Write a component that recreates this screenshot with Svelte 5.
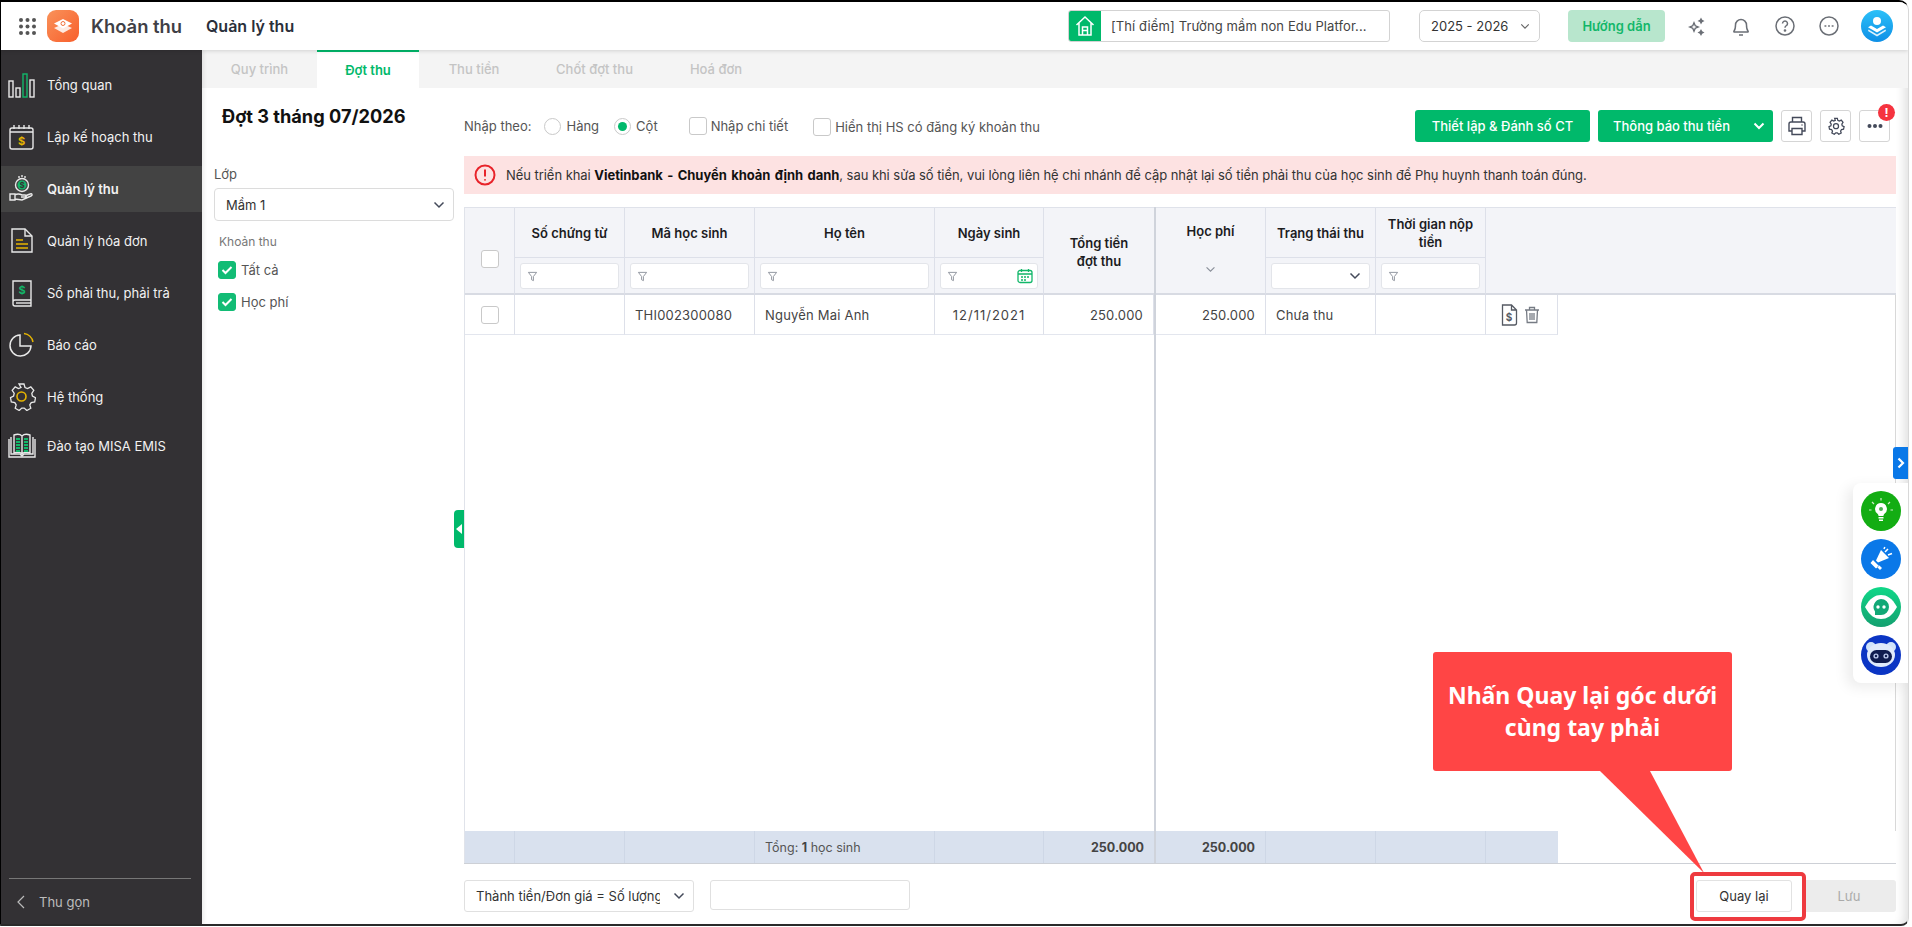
<script>
  const W = '#e8e8e8';
  const nav = [
    { label: 'Tổng quan', icon: `<g fill="none" stroke="${W}" stroke-width="1.4"><rect x="1" y="10" width="4" height="16"/><rect x="8" y="17" width="4" height="9"/><rect x="15" y="3" width="4" height="23" stroke="#12b76a"/><rect x="22" y="9" width="4" height="17"/></g>` },
    { label: 'Lập kế hoạch thu', icon: `<g fill="none" stroke="${W}" stroke-width="1.4"><rect x="2" y="5" width="23" height="21" rx="2"/><path d="M2 9h23"/><path d="M6 2v4M11 2v4M16 2v4M21 2v4"/></g><text x="13.5" y="22" font-size="11" font-weight="700" text-anchor="middle" fill="#e6b400" font-family="Inter">$</text>` },
    { label: 'Quản lý thu', active: true, icon: `<g fill="none" stroke="${W}" stroke-width="1.4"><circle cx="14" cy="10" r="6.5"/><path d="M11 1v2M14 0v2M17 1v2"/><path d="M2 19h5v6H2zM7 20c3-2 5-1 7 0h3c2 0 2 2 0 2h-4M7 24l7 1 9-4c2-1 1-3-1-2l-5 2"/></g><circle cx="14" cy="10" r="4.5" fill="#12b76a"/><text x="14" y="13" font-size="8" font-weight="700" text-anchor="middle" fill="#333" font-family="Inter">$</text>` },
    { label: 'Quản lý hóa đơn', icon: `<g fill="none" stroke="${W}" stroke-width="1.4"><path d="M4 2h13l7 7v16H4z"/><path d="M17 2v7h7"/></g><path d="M8 13h7M8 17h12M8 21h12" stroke="#e6b400" stroke-width="1.6"/>` },
    { label: 'Sổ phải thu, phải trả', icon: `<g fill="none" stroke="${W}" stroke-width="1.4"><path d="M5 23V2h18v25H7a2 2 0 0 1-2-2v-2a2 2 0 0 1 2-2h16"/><path d="M8 24h15"/></g><text x="14" y="15" font-size="11" font-weight="700" text-anchor="middle" fill="#12b76a" font-family="Inter">$</text>` },
    { label: 'Báo cáo', icon: `<g fill="none" stroke-width="1.5"><path d="M12 4a10.5 10.5 0 1 0 11 11H12z" stroke="${W}"/><path d="M16 2.5A10.5 10.5 0 0 1 25 11" stroke="#e6b400"/></g>` },
    { label: 'Hệ thống', icon: `<path d="M11.5 2h5l1 3.5 2.5 1 3.3-1.7 3 3.6-2 3 .6 2.6 3.1 1.6-.8 4.4-3.5.6-1.4 2.3 1 3.4-4 2.2-2.6-2.4h-2.4l-2.6 2.4-4-2.2 1-3.4-1.4-2.3-3.5-.6-.8-4.4 3.1-1.6.6-2.6-2-3 3-3.6 3.3 1.7 2.5-1z" fill="none" stroke="${W}" stroke-width="1.3" transform="translate(-.5 -1)"/><circle cx="13.5" cy="13.5" r="4.5" fill="none" stroke="#e6b400" stroke-width="1.6"/>` },
    { label: 'Đào tạo MISA EMIS', short: true, icon: `<g fill="none" stroke="${W}" stroke-width="1.4"><path d="M3 5v17h9l2 2 2-2h9V5"/><path d="M1 7v18h26V7M14 4v20M14 4c-2-2-5-2-8-1v18c3-1 6-1 8 1 2-2 5-2 8-1V3c-3-1-6-1-8 1z"/></g><path d="M8 7h4M8 10h4M8 13h4M8 16h4M8 19h4M16 7h4M16 10h4M16 13h4M16 16h4M16 19h4" stroke="#12b76a" stroke-width="2"/>` }
  ];
  const filter = `<svg width="11" height="11" viewBox="0 0 12 12" fill="none" stroke="#8a8f99"><path d="M1.5 1.5h9L7 6v4.5L5 9.5V6z"/></svg>`;
  const chev = `<svg width="12" height="8" viewBox="0 0 12 8" fill="none" stroke="#444a5a" stroke-width="1.5"><path d="M1.5 1.5 6 6l4.5-4.5"/></svg>`;
  const chevThin = `<svg width="10" height="7" viewBox="0 0 12 8" fill="none" stroke="#666" stroke-width="1.4"><path d="M1.5 1.5 6 6l4.5-4.5"/></svg>`;
</script>

<div class="frame">
  <div class="window">
    <header class="topbar">
      <svg class="apps" width="17" height="17" viewBox="0 0 17 17" fill="#555">
        {#each [2, 8.5, 15] as y}
          {#each [2, 8.5, 15] as x}
            <circle cx={x} cy={y} r="2" />
          {/each}
        {/each}
      </svg>
      <div class="logo">
        <svg width="20" height="16" viewBox="0 0 20 16">
          <path d="M10 6 19 10 10 15 1 10z" fill="#fff" opacity=".85" />
          <path d="M10 1 19 5.5 10 10.5 1 5.5z" fill="#fff" />
          <circle cx="10" cy="5.5" r="2" fill="none" stroke="#f2703a" />
        </svg>
      </div>
      <div class="app-name">Khoản thu</div>
      <div class="page-name">Quản lý thu</div>

      <div class="school">
        <span class="house">
          <svg width="20" height="22" viewBox="0 0 20 22" fill="none" stroke="#fff" stroke-width="1.5">
            <path d="M1.5 10 10 2l8.5 8M4 8v12h12V8M7.5 20v-8h5v8M7.5 15.5h5" />
          </svg>
        </span>
        <span class="school-name">[Thí điểm] Trường mầm non Edu Platfor...</span>
      </div>
      <div class="year">2025 - 2026 {@html chevThin}</div>
      <button class="guide">Hướng dẫn</button>

      <svg class="ico" style="margin-left:22px" width="20" height="20" viewBox="0 0 20 20" fill="#6b6f76">
        <path d="M7 5l1.8 4.2L13 11l-4.2 1.8L7 17l-1.8-4.2L1 11l4.2-1.8zM7 8.5 6.3 10.3 4.5 11l1.8.7L7 13.500l.7-1.8 1.8-.7-1.8-.7z" fill-rule="evenodd" />
        <path d="M14 1.5l1.2 2.3 2.3 1.2-2.3 1.2L14 8.500l-1.2-2.5L10.500 5l2.3-1.2zM14 13l1.2 2.3 2.3 1.2-2.3 1.2L14 20l-1.2-2.3-2.3-1.2 2.3-1.2z" />
      </svg>
      <svg class="ico" style="margin-left:24px" width="20" height="22" viewBox="0 0 20 22" fill="none" stroke="#6b6f76" stroke-width="1.5">
        <path d="M3 16c1.5-1.5 1.5-3 1.5-6a5.5 5.5 0 0 1 11 0c0 3 0 4.5 1.5 6 .5.7 0 1-.5 1h-13c-.5 0-1-.3-.5-1zM8 20h4" />
      </svg>
      <svg class="ico" style="margin-left:24px" width="20" height="20" viewBox="0 0 20 20" fill="none" stroke="#6b6f76" stroke-width="1.5">
        <circle cx="10" cy="10" r="9" />
        <path d="M7.5 7.5a2.5 2.5 0 1 1 3.8 2.2c-.9.5-1.3 1-1.3 2" />
        <circle cx="10" cy="14.5" r=".6" fill="#6b6f76" />
      </svg>
      <svg class="ico" style="margin-left:24px" width="20" height="20" viewBox="0 0 20 20" fill="none" stroke="#6b6f76" stroke-width="1.5">
        <circle cx="10" cy="10" r="9" />
        <path d="M6 10h.8M9.6 10h.8M13.2 10h.8" stroke-linecap="round" />
      </svg>
      <div class="avatar">
        <svg width="22" height="22" viewBox="0 0 22 22" fill="#fff">
          <circle cx="11" cy="6" r="4" />
          <path d="M5 10.5 11 14l6-3.500 3 1.800L11 17.500 2 12.300z" />
          <path d="M2.5 14.5 11 19.5l8.5-5 .5 1.5L11 21.5 2 16z" opacity=".85" />
        </svg>
      </div>
    </header>

    <div class="body">
      <nav class="sidebar">
        <div class="nav-list">
          {#each nav as item}
            <div class="nav-item" class:active={item.active} class:short={item.short}>
              <svg width="28" height="28" viewBox="0 0 28 28">{@html item.icon}</svg>
              <span>{item.label}</span>
            </div>
          {/each}
        </div>
        <div class="collapse">
          <svg width="10" height="14" viewBox="0 0 10 14" fill="none" stroke="#bbb" stroke-width="1.2"><path d="M8 1 2 7l6 6" /></svg>
          Thu gọn
        </div>
      </nav>

      <div class="content">
        <div class="tabs">
          <div class="tab t1">Quy trình</div>
          <div class="tab t2 active">Đợt thu</div>
          <div class="tab t3">Thu tiền</div>
          <div class="tab t4">Chốt đợt thu</div>
          <div class="tab t5">Hoá đơn</div>
        </div>

        <div class="work">
          <aside class="left">
            <h2>Đợt 3 tháng 07/2026</h2>
            <label class="lbl" for="lop">Lớp</label>
            <div class="select" id="lop">Mầm 1 {@html chev}</div>
            <div class="group">Khoản thu</div>
            <div class="check-row"><span class="check on"><svg width="12" height="10" viewBox="0 0 12 10" fill="none" stroke="#fff" stroke-width="2"><path d="M1.5 5 4.5 8l6-6" /></svg></span>Tất cả</div>
            <div class="check-row"><span class="check on"><svg width="12" height="10" viewBox="0 0 12 10" fill="none" stroke="#fff" stroke-width="2"><path d="M1.5 5 4.5 8l6-6" /></svg></span>Học phí</div>
            <div class="toggle"><i></i></div>
          </aside>

          <main class="main">
            <div class="toolbar">
              <span class="opt">Nhập theo:</span>
              <span class="radio r1"></span><span class="opt">Hàng</span>
              <span class="radio r2 on"></span><span class="opt">Cột</span>
              <span class="check c1"></span><span class="opt">Nhập chi tiết</span>
              <span class="check c2"></span><span class="opt low">Hiển thị HS có đăng ký khoản thu</span>

              <button class="green b1">Thiết lập &amp; Đánh số CT</button>
              <button class="green b2">Thông báo thu tiền
                <svg width="12" height="8" viewBox="0 0 12 8" fill="none" stroke="#fff" stroke-width="2"><path d="M1.5 1.5 6 6l4.5-4.5" /></svg>
              </button>
              <button class="sq" aria-label="In">
                <svg width="20" height="20" viewBox="0 0 20 20" fill="none" stroke="#444a5a" stroke-width="1.4"><path d="M5.5 6V1.5h9V6M5 15H2V8a2 2 0 0 1 2-2h12a2 2 0 0 1 2 2v7h-3M5 12.5h10v6H5zM14.5 9h1" /></svg>
              </button>
              <button class="sq" aria-label="Cài đặt">
                <svg width="18" height="18" viewBox="0 0 20 20" fill="none" stroke="#444a5a" stroke-width="1.4"><path d="M8.5 1.5h3l.5 2.3 1.7.8 2.1-1.100 2 2.400-1.300 2 .4 1.800 2.100 1-.6 2.900-2.300.4-1 1.600.7 2.200-2.700 1.400-1.700-1.600h-1.600l-1.700 1.600-2.700-1.400.7-2.200-1-1.600-2.300-.4-.6-2.900 2.100-1 .4-1.800-1.300-2 2-2.400 2.100 1.100 1.700-.8z" /><circle cx="10" cy="10.2" r="2.8" /></svg>
              </button>
              <button class="sq more">
                <svg width="16" height="6" viewBox="0 0 16 6" fill="#444a5a"><circle cx="2.5" cy="3" r="2" /><circle cx="8" cy="3" r="2" /><circle cx="13.5" cy="3" r="2" /></svg>
                <span class="badge">!</span>
              </button>
            </div>

            <div class="alert">
              <svg width="22" height="22" viewBox="0 0 22 22" fill="none" stroke="#e8232a" stroke-width="2"><circle cx="11" cy="11" r="9.5" /><path d="M11 5.5v7M11 15.2v1.300" /></svg>
              <span>Nếu triển khai <b>Vietinbank - Chuyển khoản định danh</b>, sau khi sửa số tiền, vui lòng liên hệ chi nhánh để cập nhật lại số tiền phải thu của học sinh để Phụ huynh thanh toán đúng.</span>
            </div>

            <div class="table">
              <div class="pane pane-l">
                <div class="thead cols-l">
                  <div class="th span chk"><span class="check"></span></div>
                  <div class="th top">Số chứng từ</div>
                  <div class="th top">Mã học sinh</div>
                  <div class="th top">Họ tên</div>
                  <div class="th top">Ngày sinh</div>
                  <div class="th span mid last">Tổng tiền<br />đợt thu</div>
                  <div class="th flt"><div class="finput">{@html filter}</div></div>
                  <div class="th flt"><div class="finput">{@html filter}</div></div>
                  <div class="th flt"><div class="finput">{@html filter}</div></div>
                  <div class="th flt"><div class="finput">{@html filter}
                    <svg class="cal" width="16" height="16" viewBox="0 0 16 16" fill="none" stroke="#12b76a" stroke-width="1.3"><rect x="1" y="2.5" width="14" height="12" rx="2" /><path d="M1 6h14M4.5 1v3M11.5 1v3M4 9h2M7 9h2M10 9h2M4 12h2M7 12h2" /></svg>
                  </div></div>
                </div>
                <div class="trow cols-l">
                  <div class="td chk"><span class="check"></span></div>
                  <div class="td"></div>
                  <div class="td pad">THI002300080</div>
                  <div class="td pad">Nguyễn Mai Anh</div>
                  <div class="td center">12/11/2021</div>
                  <div class="td right last">250.000</div>
                </div>
                <div class="fill"></div>
                <div class="tfoot cols-l">
                  <div class="tf"></div>
                  <div class="tf"></div>
                  <div class="tf"></div>
                  <div class="tf sum">Tổng: <b>1</b> học sinh</div>
                  <div class="tf"></div>
                  <div class="tf right"><b>250.000</b></div>
                </div>
              </div>

              <div class="pane pane-r">
                <div class="thead cols-r">
                  <div class="th span fee"><span>Học phí</span>
                    <svg width="11" height="7" viewBox="0 0 12 8" fill="none" stroke="#8a8f99" stroke-width="1.3"><path d="M1.5 1.5 6 6l4.5-4.5" /></svg>
                  </div>
                  <div class="th top">Trạng thái thu</div>
                  <div class="th top">Thời gian nộp<br />tiền</div>
                  <div class="th span wide"></div>
                  <div class="th flt"><div class="finput sel">{@html chev}</div></div>
                  <div class="th flt"><div class="finput">{@html filter}</div></div>
                </div>
                <div class="trow cols-r edge">
                  <div class="td right">250.000</div>
                  <div class="td pad">Chưa thu</div>
                  <div class="td"></div>
                  <div class="td acts">
                    <svg width="17" height="22" viewBox="0 0 17 22" fill="none" stroke="#555a63" stroke-width="1.3"><path d="M1.5 1h9l5 5v13a2 2 0 0 1-2 2h-12zM10.5 1v5h5" /><text x="8" y="17" font-size="10" font-weight="700" fill="#555a63" stroke="none" text-anchor="middle" font-family="Inter">$</text></svg>
                    <svg width="16" height="18" viewBox="0 0 16 18" fill="none" stroke="#767b84" stroke-width="1.3"><path d="M1 4h14M5.5 4V1.5h5V4M2.5 4l.7 12.5h9.6L13.5 4M6 7v7M8 7v7M10 7v7" /></svg>
                  </div>
                </div>
                <div class="fill edge"></div>
                <div class="tfoot cols-r">
                  <div class="tf right"><b>250.000</b></div>
                  <div class="tf"></div>
                  <div class="tf"></div>
                  <div class="tf"></div>
                </div>
              </div>
            </div>

            <div class="bottom">
              <div class="formula"><span>Thành tiền/Đơn giá = Số lượng</span>{@html chev}</div>
              <div class="blank"></div>
              <button class="back">Quay lại</button>
              <button class="save">Lưu</button>
            </div>
          </main>
        </div>
      </div>
    </div>

    <div class="side-tab">
      <svg width="8" height="12" viewBox="0 0 8 12" fill="none" stroke="#fff" stroke-width="2.2"><path d="M1.5 1.5 6 6l-4.5 4.5" /></svg>
    </div>
    <div class="dock">
      <span class="dot bulb">
        <svg width="26" height="28" viewBox="0 0 26 28" fill="#fff">
          <path d="M13 6a6 6 0 0 0-3.5 10.8c.7.6 1 1.2 1 2.200h5c0-1 .3-1.600 1-2.200A6 6 0 0 0 13 6z" />
          <circle cx="13" cy="12" r="2" fill="#4caf50" />
          <rect x="10.5" y="20" width="5" height="1.5" /><rect x="11" y="22.5" width="4" height="1.5" />
          <path d="M13 1v2.5M4 5l2 2M22 5l-2 2M1 13h2.5M22.5 13H25" stroke="#cfe9c9" stroke-width="1.2" />
        </svg>
      </span>
      <span class="dot horn">
        <svg width="26" height="26" viewBox="0 0 26 26" fill="#fff">
          <path d="M13 4l8 8-11 4.5-2-2z" />
          <path d="M5 14l6 6-3 2.5-5.5-5.5zM9 21l3 3 2-2-2.5-2.5z" />
          <path d="M17 6l3-3M20 9l4-1.5M16 3l.8-2" stroke="#fff" stroke-width="1.5" />
        </svg>
      </span>
      <span class="dot chat">
        <svg width="34" height="26" viewBox="0 0 34 26">
          <path d="M1 13C6 4 11 1 17 1s11 3 16 12c-5 9-10 12-16 12S6 22 1 13z" fill="#fff" />
          <path d="M17 5a8 8 0 0 1 0 16h-6v-3.5A8 8 0 0 1 17 5z" fill="#12a876" />
          <circle cx="14" cy="13" r="1.7" fill="#fff" /><circle cx="20" cy="13" r="1.7" fill="#fff" />
        </svg>
      </span>
      <span class="dot bot">
        <svg width="32" height="28" viewBox="0 0 32 28">
          <circle cx="6" cy="6" r="5" fill="#cfe3fb" /><circle cx="26" cy="6" r="5" fill="#cfe3fb" />
          <ellipse cx="16" cy="14" rx="14" ry="12" fill="#dfeafb" />
          <rect x="5" y="9" width="22" height="13" rx="6.5" fill="#101c4f" />
          <circle cx="11" cy="15" r="2.6" fill="#b9c6ea" /><circle cx="21" cy="15" r="2.6" fill="#b9c6ea" />
          <circle cx="11" cy="15" r="1.2" fill="#101c4f" /><circle cx="21" cy="15" r="1.2" fill="#101c4f" />
        </svg>
      </span>
    </div>

    <div class="callout">
      Nhấn Quay lại góc dưới<br />cùng tay phải
    </div>
    <svg class="tail" width="110" height="103" viewBox="0 0 110 103"><path d="M0 0h50l54 102z" fill="#ff4545" /></svg>
    <div class="focus"></div>
  </div>
</div>

<style>
  :global(body) {
    margin: 0;
    background: #fff;
  }

  .frame {
    width: 1912px;
    height: 927px;
    overflow: hidden;
    background: #fff;
    font-family: Inter, 'Noto Sans', sans-serif;
    font-size: 13px;
    color: #333;
  }

  .window {
    position: relative;
    box-sizing: border-box;
    width: 1909px;
    height: 926px;
    display: flex;
    flex-direction: column;
    border-top: 2px solid #000;
    border-left: 1px solid #000;
    border-bottom: 2px solid #2a2a2a;
    border-right: 1px solid #d8d8d8;
    border-bottom-right-radius: 8px;
    border-top-right-radius: 10px;
    overflow: hidden;
    box-shadow: inset -10px 0 10px -6px rgba(0, 0, 0, 0.12);
  }

  /* header */
  .topbar {
    height: 48px;
    flex: none;
    display: flex;
    align-items: center;
    background: #fff;
    position: relative;
    z-index: 3;
    box-shadow: 0 1px 4px rgba(0, 0, 0, 0.14);
  }
  .apps {
    margin-left: 18px;
  }
  .logo {
    width: 32px;
    height: 32px;
    margin-left: 11px;
    border-radius: 9px;
    background: linear-gradient(135deg, #f9925a, #f85f2c);
    display: flex;
    align-items: center;
    justify-content: center;
  }
  .app-name {
    margin-left: 12px;
    font-size: 18.4px;
    font-weight: 600;
    color: #3f3f46;
    width: 115px;
  }
  .page-name {
    font-size: 16px;
    font-weight: 600;
    color: #2a2f3a;
    width: 862px;
  }
  .school {
    width: 322px;
    height: 32px;
    box-sizing: border-box;
    display: flex;
    align-items: center;
    border: 1px solid #d3d3d3;
    border-radius: 3px;
    overflow: hidden;
    flex: none;
  }
  .house {
    width: 32px;
    height: 32px;
    flex: none;
    background: #00b96b;
    display: flex;
    align-items: center;
    justify-content: center;
  }
  .school-name {
    margin-left: 10px;
    white-space: nowrap;
    color: #444;
    letter-spacing: 0.1px;
  }
  .year {
    width: 121px;
    height: 32px;
    box-sizing: border-box;
    margin-left: 29px;
    padding: 0 9px 0 11px;
    display: flex;
    align-items: center;
    justify-content: space-between;
    border: 1px solid #d3d3d3;
    border-radius: 5px;
    color: #333;
    flex: none;
  }
  .guide {
    width: 97px;
    height: 32px;
    flex: none;
    margin-left: 28px;
    border: 0;
    border-radius: 4px;
    background: #b8e6cd;
    color: #12b76a;
    font: 600 13px Inter, sans-serif;
  }
  .ico {
    flex: none;
  }
  .avatar {
    width: 32px;
    height: 32px;
    flex: none;
    margin-left: 22px;
    border-radius: 50%;
    background: linear-gradient(180deg, #2cc0f8, #0e8fe6);
    display: flex;
    align-items: center;
    justify-content: center;
  }

  /* sidebar */
  .body {
    flex: 1;
    min-height: 0;
    display: flex;
  }
  .sidebar {
    width: 201px;
    flex: none;
    background: #333134;
    display: flex;
    flex-direction: column;
    color: #f2f2f2;
    box-shadow: 2px 0 4px rgba(0, 0, 0, 0.08);
    z-index: 2;
  }
  .nav-list {
    flex: 1;
    padding-top: 12px;
  }
  .nav-item {
    height: 46px;
    margin-bottom: 6px;
    display: flex;
    align-items: center;
    gap: 11px;
    padding-left: 7px;
  }
  .nav-item.short {
    margin-top: -3px;
  }
  .nav-item.active {
    background: #434343;
    font-weight: 600;
  }
  .collapse {
    margin: 0 11px 0 8px;
    height: 46px;
    box-sizing: border-box;
    border-top: 1px solid #777;
    display: flex;
    align-items: center;
    gap: 13px;
    padding-left: 7px;
    color: #bcbcbc;
  }

  /* tabs */
  .content {
    flex: 1;
    min-width: 0;
    display: flex;
    flex-direction: column;
  }
  .tabs {
    height: 38px;
    flex: none;
    display: flex;
    background: #f4f4f4;
    font-weight: 500;
    color: #c4c4c4;
  }
  .tab {
    display: flex;
    align-items: center;
    justify-content: center;
  }
  .t1 { width: 115px; }
  .t2 { width: 102px; }
  .t3 { width: 110px; }
  .t4 { width: 131px; }
  .t5 { width: 112px; }
  .tab.active {
    background: #fff;
    color: #00b96b;
    box-sizing: border-box;
    border-top: 2px solid #00b96b;
    font-weight: 600;
  }

  /* left column */
  .work {
    flex: 1;
    min-height: 0;
    display: flex;
  }
  .left {
    position: relative;
    width: 262px;
    flex: none;
    box-sizing: border-box;
    padding: 0 10px 0 12px;
  }
  h2 {
    margin: 17px 0 0 8px;
    font-size: 18.2px;
    line-height: 22px;
    font-weight: 700;
    color: #111;
  }
  .lbl {
    display: block;
    margin-top: 39px;
    line-height: 16px;
    color: #555;
  }
  .select {
    height: 33px;
    margin-top: 6px;
    box-sizing: border-box;
    padding: 0 8px 0 11px;
    display: flex;
    align-items: center;
    justify-content: space-between;
    border: 1px solid #dcdcdc;
    border-radius: 4px;
    color: #333;
  }
  .group {
    margin: 13px 0 0 5px;
    line-height: 16px;
    font-size: 12px;
    color: #777;
  }
  .check-row {
    display: flex;
    align-items: center;
    gap: 5px;
    height: 18px;
    margin: 11px 0 14px 4px;
    color: #555;
  }
  .check {
    width: 18px;
    height: 18px;
    flex: none;
    box-sizing: border-box;
    border: 1px solid #c9c9c9;
    border-radius: 3px;
    background: #fff;
    display: inline-flex;
    align-items: center;
    justify-content: center;
  }
  .check.on {
    background: #12bc75;
    border-color: #12bc75;
  }
  .toggle {
    position: absolute;
    right: 0;
    top: 422px;
    width: 10px;
    height: 38px;
    background: #00b96b;
    border-radius: 4px 0 0 4px;
    display: flex;
    align-items: center;
    justify-content: center;
  }
  .toggle i {
    width: 0;
    height: 0;
    border: 5px solid transparent;
    border-left: 0;
    border-right: 6px solid #fff;
  }

  /* toolbar */
  .main {
    flex: 1;
    min-width: 0;
    box-sizing: border-box;
    padding-right: 12px;
    display: flex;
    flex-direction: column;
  }
  .toolbar {
    height: 32px;
    margin-top: 22px;
    margin-right: 6px;
    flex: none;
    display: flex;
    align-items: center;
    color: #555;
  }
  .opt {
    white-space: nowrap;
  }
  .low {
    position: relative;
    top: 1px;
  }
  .radio {
    width: 17px;
    height: 17px;
    box-sizing: border-box;
    border: 1px solid #c9c9c9;
    border-radius: 50%;
    margin-right: 5px;
    display: inline-flex;
    align-items: center;
    justify-content: center;
  }
  .radio.on::after {
    content: '';
    width: 9px;
    height: 9px;
    border-radius: 50%;
    background: #00b96b;
  }
  .r1 { margin-left: 13px; }
  .r2 { margin-left: 15px; }
  .c1 { margin: 0 4px 0 31px; }
  .c2 { margin: 2px 4px 0 25px; }
  .green {
    height: 32px;
    border: 0;
    border-radius: 3px;
    background: #00b96b;
    color: #fff;
    font: 500 13px Inter, sans-serif;
    white-space: nowrap;
  }
  .b1 {
    width: 175px;
    margin-left: auto;
  }
  .b2 {
    width: 175px;
    margin-left: 8px;
    padding: 0 8px 0 15px;
    display: flex;
    align-items: center;
    justify-content: space-between;
  }
  .sq {
    position: relative;
    width: 31px;
    height: 32px;
    margin-left: 8px;
    padding: 0;
    border: 1px solid #d5d5d5;
    border-radius: 3px;
    background: #fff;
    display: flex;
    align-items: center;
    justify-content: center;
  }
  .badge {
    position: absolute;
    top: -7px;
    right: -6px;
    width: 17px;
    height: 17px;
    border-radius: 50%;
    background: #f5333f;
    color: #fff;
    font: 700 12px/17px Inter, sans-serif;
    text-align: center;
  }

  .alert {
    height: 38px;
    margin-top: 14px;
    flex: none;
    padding-left: 10px;
    display: flex;
    align-items: center;
    gap: 10px;
    background: #fde2e2;
    color: #333;
    white-space: nowrap;
    letter-spacing: -0.05px;
  }
  .alert b {
    font-weight: 700;
    color: #111;
    word-spacing: 1.5px;
  }

  /* table */
  .table {
    flex: 1;
    min-height: 0;
    margin-top: 13px;
    display: flex;
    border-bottom: 1px solid #cdd0d6;
  }
  .pane {
    display: flex;
    flex-direction: column;
  }
  .pane-l {
    width: 692px;
    flex: none;
    box-sizing: border-box;
    border-left: 1px solid #e0e3ea;
    border-right: 2px solid #cfd3db;
  }
  .pane-r {
    flex: 1;
    min-width: 0;
  }
  .cols-l,
  .cols-r {
    display: grid;
  }
  .cols-l {
    grid-template-columns: 50px 110px 130px 180px 109px 110px;
  }
  .cols-r {
    grid-template-columns: 110px 110px 110px 72px 1fr;
  }
  .thead {
    flex: none;
    box-sizing: border-box;
    grid-template-rows: 50px 37px;
    background: #f3f4f8;
    border-top: 1px solid #dfe2ea;
    height: 88px;
  }
  .th {
    box-sizing: border-box;
    border-right: 1px solid #dde0e9;
    border-bottom: 1px solid #dde0e9;
    font-weight: 600;
    font-size: 13px;
    line-height: 18px;
    color: #1c1c1f;
    text-align: center;
  }
  .span {
    grid-row: span 2;
    border-bottom: 2px solid #d8dbe3;
  }
  .top {
    display: flex;
    align-items: center;
    justify-content: center;
  }
  .flt {
    padding: 5px 5px 0;
    border-bottom: 2px solid #d8dbe3;
  }
  .chk {
    display: flex;
    align-items: flex-end;
    justify-content: center;
    padding-bottom: 25px;
  }
  .mid {
    padding-top: 26px;
  }
  .last {
    border-right: 0;
  }
  .fee {
    display: flex;
    flex-direction: column;
    align-items: center;
    padding-top: 14px;
    gap: 26px;
  }
  .wide {
    grid-row: 1 / span 2;
    grid-column: 4 / span 2;
    border-right: 0;
  }
  .finput {
    height: 26px;
    box-sizing: border-box;
    padding-left: 6px;
    display: flex;
    align-items: center;
    background: #fff;
    border: 1px solid #e3e5ea;
    border-radius: 3px;
  }
  .finput.sel {
    justify-content: flex-end;
    padding-right: 8px;
  }
  .cal {
    margin-left: auto;
    margin-right: 4px;
  }
  .trow {
    flex: none;
    height: 40px;
  }
  .td {
    box-sizing: border-box;
    border-right: 1px solid #dde0e9;
    border-bottom: 1px solid #e3e6ee;
    display: flex;
    align-items: center;
    color: #444;
    letter-spacing: 0.2px;
  }
  .td.chk {
    align-items: center;
    padding: 0;
  }
  .pad {
    padding-left: 10px;
  }
  .center {
    justify-content: center;
    letter-spacing: 1px;
  }
  .right {
    justify-content: flex-end;
    padding-right: 10px;
  }
  .acts {
    padding-left: 15px;
    gap: 6px;
  }
  .fill {
    flex: 1;
  }
  .edge {
    border-right: 1px solid #d8d8d8;
  }
  .tfoot {
    flex: none;
    height: 32px;
  }
  .tf {
    box-sizing: border-box;
    background: #d9e1ee;
    border-right: 1px solid #ced7e6;
    display: flex;
    align-items: center;
    color: #555;
    font-size: 12.5px;
  }
  .tf b {
    font-weight: 700;
    color: #444;
  }
  .tf.sum {
    padding-left: 10px;
    white-space: pre;
  }
  .tfoot.cols-r .tf:last-child,
  .tfoot.cols-l .tf:last-child {
    border-right: 0;
  }

  /* bottom bar */
  .bottom {
    height: 60px;
    flex: none;
    box-sizing: border-box;
    padding-top: 16px;
    display: flex;
    align-items: flex-start;
  }
  .formula {
    width: 230px;
    height: 32px;
    box-sizing: border-box;
    padding: 0 8px 0 11px;
    display: flex;
    align-items: center;
    justify-content: space-between;
    border: 1px solid #e0e0e0;
    border-radius: 3px;
    color: #333;
  }
  .formula span {
    width: 184px;
    overflow: hidden;
    white-space: nowrap;
  }
  .blank {
    width: 200px;
    height: 30px;
    margin-left: 16px;
    box-sizing: border-box;
    border: 1px solid #e0e0e0;
    border-radius: 3px;
  }
  .back,
  .save {
    height: 32px;
    border-radius: 3px;
    font: 400 13px Inter, sans-serif;
  }
  .back {
    width: 96px;
    margin-left: auto;
    background: #fff;
    border: 1px solid #e2e2e2;
    color: #333;
  }
  .save {
    width: 94px;
    margin-left: 10px;
    border: 0;
    background: #ececec;
    color: #aaa;
  }

  /* floating things */
  .side-tab {
    position: absolute;
    left: 1892px;
    top: 445px;
    width: 16px;
    height: 32px;
    background: #0a78e8;
    border-radius: 3px 0 0 3px;
    display: flex;
    align-items: center;
    justify-content: center;
  }
  .dock {
    position: absolute;
    left: 1852px;
    top: 481px;
    width: 56px;
    height: 200px;
    box-sizing: border-box;
    padding-top: 8px;
    background: #fff;
    border-radius: 8px 0 0 8px;
    box-shadow: -6px 4px 14px rgba(0, 0, 0, 0.08);
    display: flex;
    flex-direction: column;
    align-items: center;
    gap: 8px;
  }
  .dot {
    width: 40px;
    height: 40px;
    border-radius: 50%;
    flex: none;
    display: flex;
    align-items: center;
    justify-content: center;
    overflow: hidden;
  }
  .bulb { background: #13ad13; }
  .horn { background: #0a78e8; }
  .chat { background: linear-gradient(180deg, #10d888, #14a070); }
  .bot { background: #0b35c4; }
  .callout {
    position: absolute;
    left: 1432px;
    top: 650px;
    width: 299px;
    height: 119px;
    box-sizing: border-box;
    padding-top: 27px;
    background: #ff4545;
    border-radius: 3px;
    color: #fff;
    font: 700 23px/32px 'Noto Sans', sans-serif;
    text-align: center;
  }
  .tail {
    position: absolute;
    left: 1599px;
    top: 769px;
  }
  .focus {
    position: absolute;
    left: 1689px;
    top: 870px;
    width: 116px;
    height: 49px;
    box-sizing: border-box;
    border: 4px solid #ee3a3f;
    border-radius: 5px;
  }
</style>
